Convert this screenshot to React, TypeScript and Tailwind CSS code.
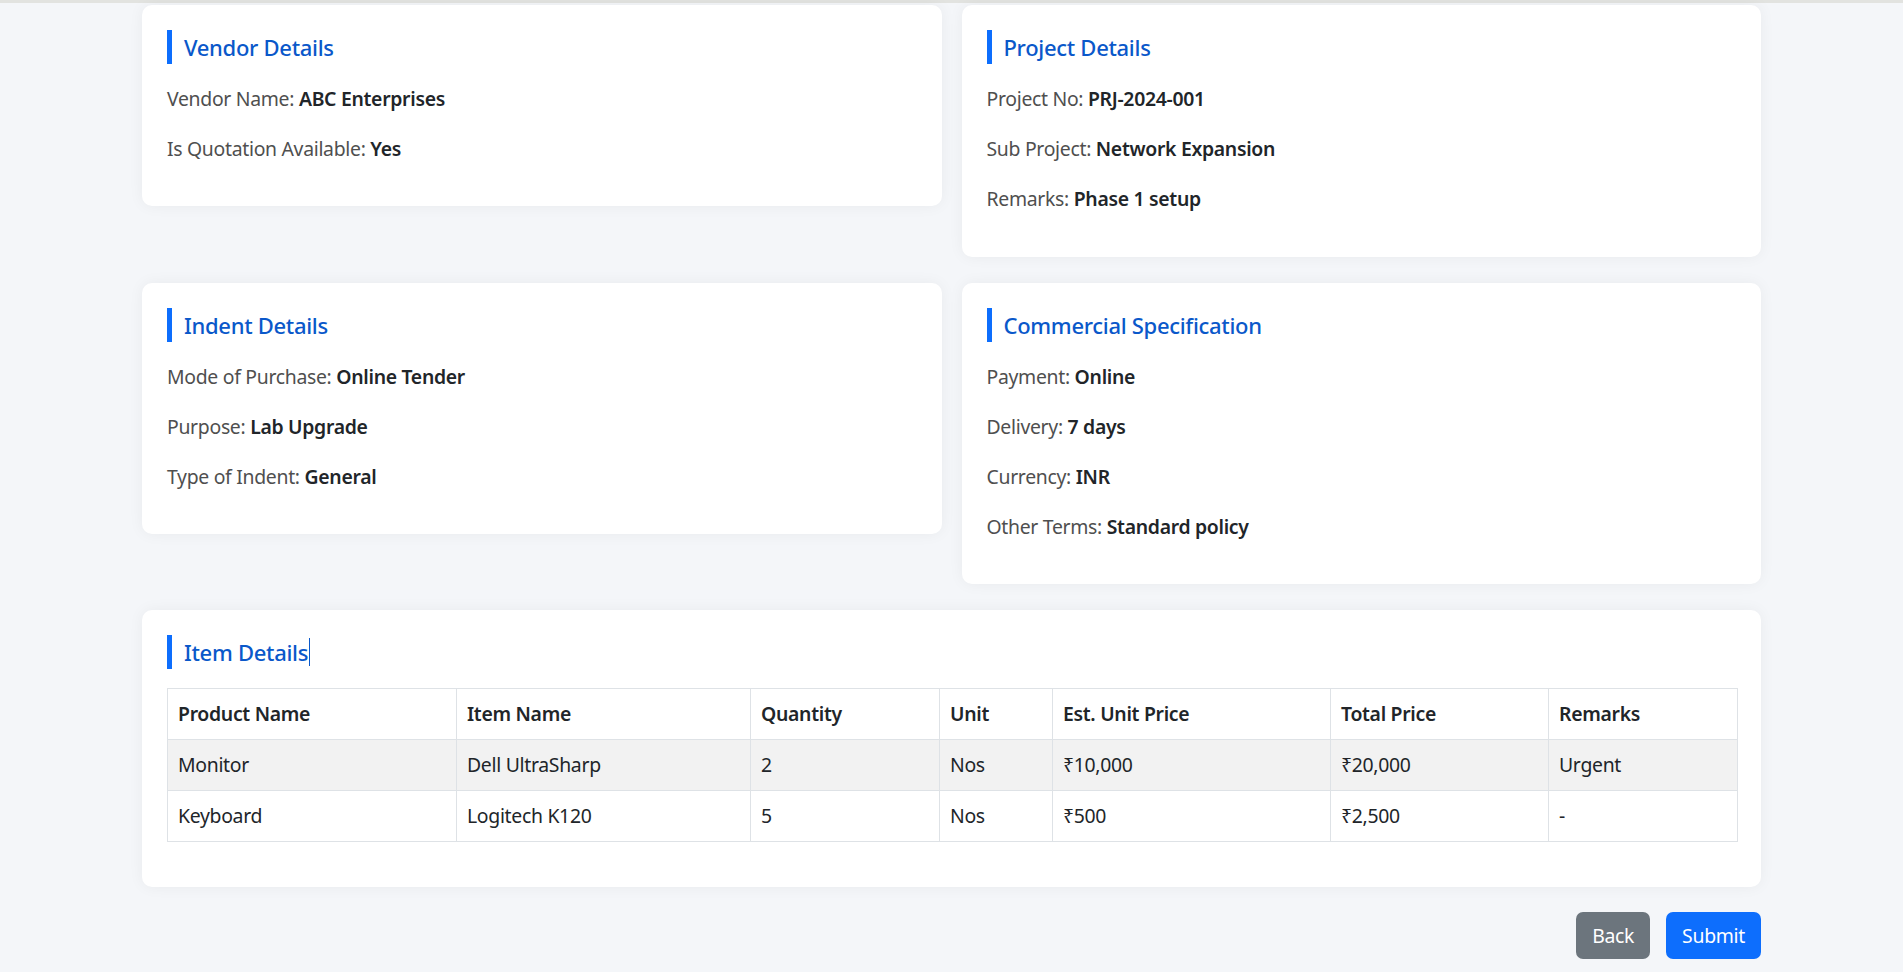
import React from "react";

const font = { fontFamily: '"Noto Sans", "Open Sans", sans-serif' };

function Title({ children, caret, mb = "mb-[20px]" }: { children: React.ReactNode; caret?: boolean; mb?: string }) {
  return (
    <div className={`flex items-center h-[34px] border-l-[5px] border-[#0d6efd] pl-[12px] ${mb}`}>
      <span className="text-[22px] leading-[34px] font-medium tracking-[-0.3px] text-[#0a58ca]">{children}</span>
      {caret && <span className="inline-block w-px h-[28px] bg-[#0a58ca] ml-px" />}
    </div>
  );
}

function Field({ label, value }: { label: string; value: string }) {
  return (
    <p className="text-[19.4px] leading-[30px] mb-[20.2px] tracking-[-0.3px]">
      <span className="font-normal text-[#4f4f4f]">{label}: </span>
      <span className="font-semibold text-[#212529]">{value}</span>
    </p>
  );
}

function Card({ title, fields }: { title: string; fields: [string, string][] }) {
  return (
    <div className="bg-white rounded-[10px] shadow-[0_0_15px_rgba(0,0,0,0.05)] px-[25px] pt-[25px] pb-[22px]">
      <Title>{title}</Title>
      {fields.map(([l, v]) => (
        <Field key={l} label={l} value={v} />
      ))}
    </div>
  );
}

const cols = [289, 294, 189, 113, 278, 218, 189];
const headers = ["Product Name", "Item Name", "Quantity", "Unit", "Est. Unit Price", "Total Price", "Remarks"];
const rows = [
  ["Monitor", "Dell UltraSharp", "2", "Nos", "₹10,000", "₹20,000", "Urgent"],
  ["Keyboard", "Logitech K120", "5", "Nos", "₹500", "₹2,500", "-"],
];

export default function App() {
  return (
    <div className="min-h-[972px] bg-[#f4f6f9]" style={font}>
      <div className="h-[3px] bg-[#e2e3e0]" />
      <div className="w-[1619px] mx-auto pt-[2px] pb-[14px]">
        <div className="grid grid-cols-2 gap-x-[20px] gap-y-[26px] items-start">
          <Card
            title="Vendor Details"
            fields={[
              ["Vendor Name", "ABC Enterprises"],
              ["Is Quotation Available", "Yes"],
            ]}
          />
          <Card
            title="Project Details"
            fields={[
              ["Project No", "PRJ-2024-001"],
              ["Sub Project", "Network Expansion"],
              ["Remarks", "Phase 1 setup"],
            ]}
          />
          <Card
            title="Indent Details"
            fields={[
              ["Mode of Purchase", "Online Tender"],
              ["Purpose", "Lab Upgrade"],
              ["Type of Indent", "General"],
            ]}
          />
          <Card
            title="Commercial Specification"
            fields={[
              ["Payment", "Online"],
              ["Delivery", "7 days"],
              ["Currency", "INR"],
              ["Other Terms", "Standard policy"],
            ]}
          />
        </div>

        <div className="mt-[26px] bg-white rounded-[10px] shadow-[0_0_15px_rgba(0,0,0,0.05)] px-[25px] pt-[25px] pb-[25px]">
          <Title caret mb="mb-[19px]">Item Details</Title>
          <table className="w-full table-fixed border-collapse text-[19.4px] tracking-[-0.3px] text-[#212529] mb-[20px]">
            <colgroup>
              {cols.map((w, i) => (
                <col key={i} style={{ width: w }} />
              ))}
            </colgroup>
            <thead>
              <tr>
                {headers.map((h) => (
                  <th key={h} className="border border-[#dee2e6] px-[10px] py-[10px] leading-[30px] text-left font-semibold">
                    {h}
                  </th>
                ))}
              </tr>
            </thead>
            <tbody>
              {rows.map((r, ri) => (
                <tr key={ri} className={ri === 0 ? "bg-[#f2f2f2]" : "bg-white"}>
                  {r.map((c, ci) => (
                    <td key={ci} className="border border-[#dee2e6] px-[10px] py-[10px] leading-[30px]">
                      {c}
                    </td>
                  ))}
                </tr>
              ))}
            </tbody>
          </table>
        </div>

        <div className="flex justify-end gap-[16px] mt-[25px]">
          <button className="h-[47px] px-[16px] rounded-[7px] bg-[#6c757d] text-white text-[19.4px] tracking-[-0.3px]">Back</button>
          <button className="h-[47px] px-[16px] rounded-[7px] bg-[#0d6efd] text-white text-[19.4px] tracking-[-0.3px]">Submit</button>
        </div>
      </div>
    </div>
  );
}
